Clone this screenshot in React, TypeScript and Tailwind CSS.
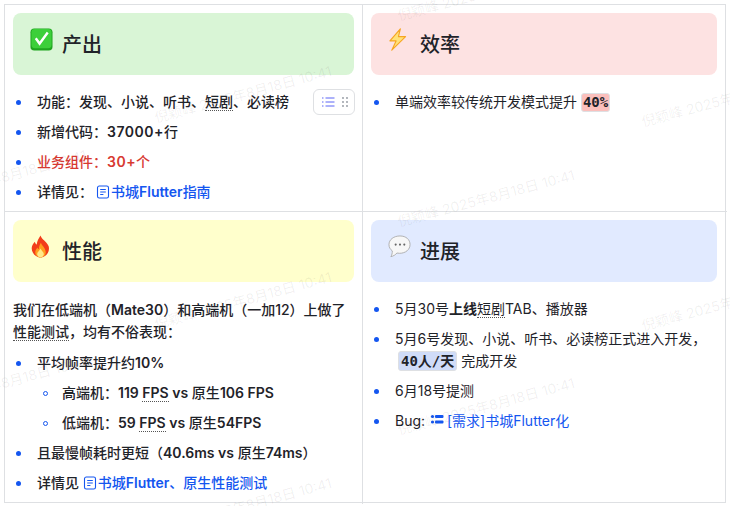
import type { ReactNode } from "react";

const font = { fontFamily: '"Inter", "Noto Sans CJK SC", sans-serif' };
const mono = { fontFamily: '"DejaVu Sans Mono", "Noto Sans CJK SC", monospace' };

function DocIcon() {
  return (
    <svg viewBox="0 0 14 14" className="mr-px inline-block h-[14px] w-[14px] align-[-2px]" fill="none" stroke="#1456f0" strokeWidth="1.100">
      <rect x="1.500" y="1" width="11" height="12" rx="1.800" />
      <path d="M4.200 4.500h5.600M4.200 7h5.600M4.200 9.500h3.200" />
    </svg>
  );
}

function CheckEmoji() {
  return (
    <svg viewBox="0 0 24 24" className="h-[23px] w-[23px]">
      <rect x="0.500" y="0.500" width="23" height="23" rx="4" fill="#1fa51f" />
      <rect x="1.500" y="1" width="21" height="20" rx="3.500" fill="#3ccf3a" />
      <path d="M5 11.500l2-1.500 3 4L17.500 4l2 1.500-9.500 13z" fill="#fff" />
    </svg>
  );
}

function BoltEmoji() {
  return (
    <svg viewBox="0 0 20 24" className="h-[23px] w-[19px]">
      <path d="M13 0.800L2 13.500h6.500L4 23.200 18.500 9h-7.500z" fill="#ffe27a" stroke="#f6a623" strokeWidth="1.200" strokeLinejoin="round" />
    </svg>
  );
}

function FireEmoji() {
  return (
    <svg viewBox="0 0 20 24" className="ml-px h-[23px] w-[19px]">
      <path d="M10 0.500c1 4 6 6 8.500 11 2 6.500-3.500 12-8.500 12S-.5 18 1 12c.7-2.500 2-3.500 3-5 .5 1.500 1 2.500 2 3C6.500 6.500 8 3.500 10 .5z" fill="#f23d1a" />
      <path d="M10.500 8c.5 2.500 5 5.500 5 10 0 3.500-2.800 5.500-5.500 5.500S4.500 21.500 4.500 18c0-2.500 1.500-3.500 2.200-5 .5 1 .8 1.500 1.500 2 .1-2.500.8-5 2.300-7z" fill="#ff9d1e" />
      <path d="M10 14c.5 2 3.500 3.500 3.500 6 0 2-1.700 3.500-3.500 3.500S6.500 22 6.500 20c0-2.500 3-4 3.500-6z" fill="#ffe98a" />
    </svg>
  );
}

function BubbleEmoji() {
  return (
    <svg viewBox="0 0 24 24" className="h-[23px] w-[23px]">
      <path d="M12.500 1C6 1 1 4.800 1 10c0 2.800 1.400 5.100 3.500 6.600.1 2.200-.5 4.400-1.500 6 2.700-.6 5-2 6.300-3.800 1 .2 1.900.3 2.700.3 6.500 0 11-4 11-9.100S19 1 12.500 1z" fill="#f7f7f7" stroke="#a8a8a8" strokeWidth="0.900" />
      <circle cx="8" cy="10" r="1.100" fill="#666" />
      <circle cx="12.500" cy="10" r="1.100" fill="#666" />
      <circle cx="17" cy="10" r="1.100" fill="#666" />
    </svg>
  );
}

function Card({ bg, icon, title }: { bg: string; icon: ReactNode; title: string }) {
  return (
    <div className={`flex h-[62px] items-start rounded-lg pl-[17px] ${bg}`}>
      <div className="mt-[15px] flex w-[32px] justify-start">{icon}</div>
      <div className="mt-[20px] text-[20px] leading-[24px] font-medium text-[#1f2329]">{title}</div>
    </div>
  );
}

function Item({ children, nested }: { children: ReactNode; nested?: boolean }) {
  return (
    <li className={`relative mt-2 text-sm leading-[22px] ${nested ? "pl-[25px]" : "pl-[24px]"}`}>
      {nested ? (
        <span className="absolute top-[9px] left-[6px] h-[5px] w-[5px] rounded-full border border-[#1456f0]" />
      ) : (
        <span className="absolute top-[9px] left-[3px] h-[5px] w-[5px] rounded-full bg-[#1456f0]" />
      )}
      {children}
    </li>
  );
}

function Dotted({ children }: { children: ReactNode }) {
  return <span className="border-b border-dotted border-[#555]">{children}</span>;
}

function Link({ children }: { children: ReactNode }) {
  return <span className="text-[#1456f0]">{children}</span>;
}

function Toolbar() {
  return (
    <div className="absolute top-[89px] left-[313px] flex h-[26px] w-[42px] items-center rounded-md border border-[#dee0e3] bg-white pl-[7px]">
      <svg viewBox="0 0 14 14" className="h-[14px] w-[14px]" fill="none" stroke="#5b65f5" strokeWidth="1">
        <path d="M4.500 3h9M4.500 7h9M4.500 11h9M1 3h1.500M1 7h1.500M1 11h1.500" />
      </svg>
      <svg viewBox="0 0 8 14" className="ml-[6px] h-[14px] w-[8px]" fill="#8f959e">
        <circle cx="2" cy="3" r="0.9" />
        <circle cx="6" cy="3" r="0.9" />
        <circle cx="2" cy="7" r="0.9" />
        <circle cx="6" cy="7" r="0.9" />
        <circle cx="2" cy="11" r="0.9" />
        <circle cx="6" cy="11" r="0.9" />
      </svg>
    </div>
  );
}

const marks = [
  [155, 108],
  [155, 314],
  [155, 520],
  [-90, 192],
  [-90, 398],
  [398, 6],
  [398, 212],
  [398, 420],
  [642, 112],
  [642, 316],
];

export default function App() {
  return (
    <div className="relative h-[506px] w-[730px] overflow-hidden bg-white text-[#1f2329]" style={font}>
      <div className="absolute top-1 left-1 grid h-[499px] w-[722px] grid-cols-[358px_364px] grid-rows-[207px_292px] border border-[#dee0e3]">
        <div className="border-r border-b border-[#dee0e3] px-2 pt-2">
          <Card bg="bg-[#d9f5d6]" icon={<CheckEmoji />} title="产出" />
          <ul className="mt-4 font-medium">
            <Item>{"功能\uFF1A发现、小说、听书、"}<Dotted>短剧</Dotted>、必读榜</Item>
            <Item>{"新增代码\uFF1A"}<span className="font-semibold tracking-[0.5px]">37000+</span>行</Item>
            <Item><span className="text-[#d83931]">{"业务组件\uFF1A"}<span className="font-semibold tracking-[0.5px]">30+</span>个</span></Item>
            <Item>{"详情见\uFF1A"}<span className="ml-[3px]"><DocIcon /></span><Link>书城<span className="font-semibold">Flutter</span>指南</Link></Item>
          </ul>
        </div>
        <div className="border-b border-[#dee0e3] pt-2 pr-[10px] pl-2">
          <Card bg="bg-[#fde2e2]" icon={<BoltEmoji />} title="效率" />
          <ul className="mt-4">
            <Item>
              单端效率较传统开发模式提升{" "}
              <code className="inline-block rounded-[3px] border border-[#dee0e3] bg-[#fbbfbc] px-[1px] text-[14px] leading-[17px] font-semibold" style={mono}>40%</code>
            </Item>
          </ul>
        </div>
        <div className="border-r border-[#dee0e3] px-2 pt-2">
          <Card bg="bg-[#ffffcc]" icon={<FireEmoji />} title="性能" />
          <div className="mt-[17px] font-medium">
            <p className="text-sm leading-[22px]">{"我们在低端机\uFF08"}<span className="font-semibold">Mate30</span>{"\uFF09和高端机\uFF08一加12\uFF09上做了"}<br /><Dotted>性能测试</Dotted>{"\uFF0C均有不俗表现\uFF1A"}</p>
            <ul className="pt-px">
              <Item>平均帧率提升约<span className="font-semibold">10%</span></Item>
              <ul className="pl-[24px]">
                <Item nested>{"高端机\uFF1A"}<span className="font-semibold">119 <Dotted>FPS</Dotted> vs</span> 原生<span className="font-semibold">106 FPS</span></Item>
                <Item nested>{"低端机\uFF1A"}<span className="font-semibold">59 <Dotted>FPS</Dotted> vs</span> 原生<span className="font-semibold">54FPS</span></Item>
              </ul>
              <Item>{"且最慢帧耗时更短\uFF08"}<span className="font-semibold">40.6ms vs</span> 原生<span className="font-semibold">74ms</span>{"\uFF09"}</Item>
              <Item>详情见 <DocIcon /><Link>书城<span className="font-semibold">Flutter</span>、原生性能测试</Link></Item>
            </ul>
          </div>
        </div>
        <div className="pt-2 pr-[10px] pl-2">
          <Card bg="bg-[#e1eaff]" icon={<BubbleEmoji />} title="进展" />
          <ul className="mt-4">
            <Item>5月30号<span className="font-semibold">上线</span><Dotted>短剧</Dotted>TAB、播放器</Item>
            <Item>
              {"5月6号发现、小说、听书、必读榜正式进入开发\uFF0C"}<br />
              <code className="ml-[3px] inline-block rounded-[3px] border border-[#dee0e3] bg-[#d0dcf8] px-[2px] text-[14px] leading-[18px] font-semibold" style={mono}>40人/天</code> 完成开发
            </Item>
            <Item>6月18号提测</Item>
            <Item>
              Bug:{" "}
              <svg viewBox="0 0 14 14" className="mr-[3px] ml-px inline-block h-[14px] w-[14px] align-[-1px]" fill="#1456f0">
                <circle cx="2.500" cy="3.500" r="1.600" />
                <rect x="5" y="2" width="8.500" height="3" rx="1" />
                <circle cx="2.500" cy="9" r="1.600" />
                <rect x="5" y="7.500" width="8.500" height="3" rx="1" />
              </svg>
              <Link>[需求]书城Flutter化</Link>
            </Item>
          </ul>
        </div>
      </div>
      <Toolbar />
      {marks.map(([x, y]) => (
        <div
          key={`${x}-${y}`}
          className="pointer-events-none absolute origin-left -rotate-[15deg] text-sm whitespace-nowrap text-[#1f2329]/[0.07]"
          style={{ left: x, top: y }}
        >
          倪颖峰 2025年8月18日 10:41
        </div>
      ))}
    </div>
  );
}
